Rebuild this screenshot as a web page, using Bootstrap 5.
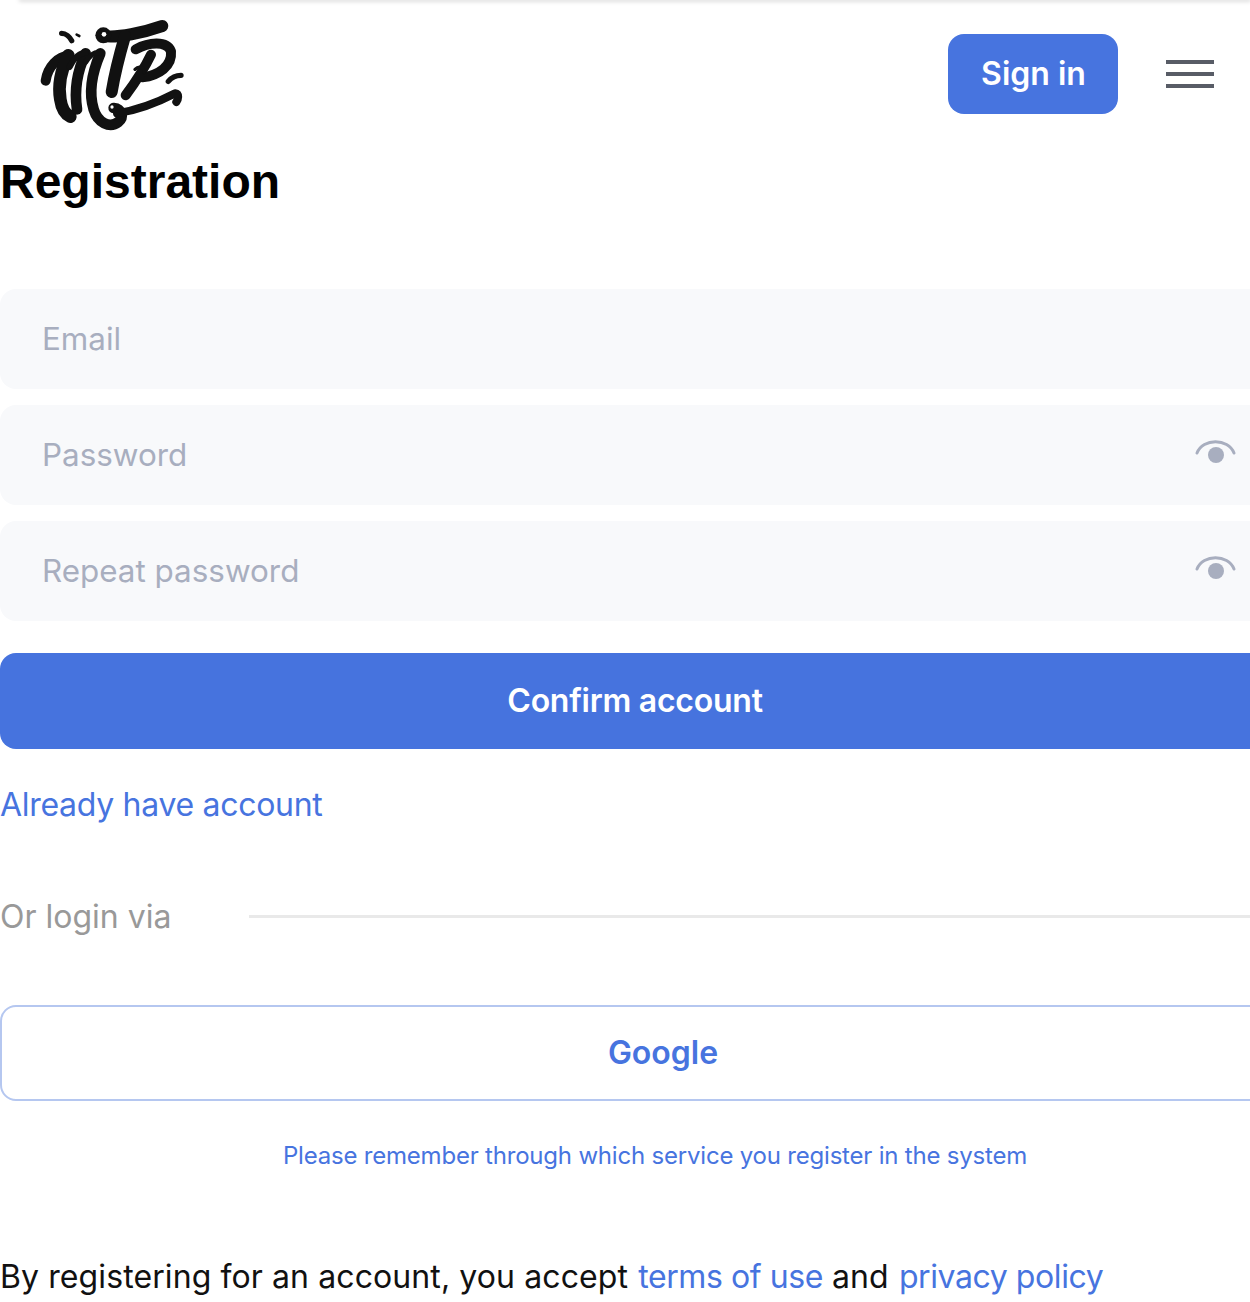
<!DOCTYPE html>
<html lang="en">
<head>
<meta charset="utf-8">
<title>Registration</title>
<link href="https://cdn.jsdelivr.net/npm/bootstrap@5.3.0/dist/css/bootstrap.min.css" rel="stylesheet">
<style>
html,body{overflow-x:hidden;background:#fff}
body{font-family:"Inter","Noto Sans","Liberation Sans",sans-serif;width:1250px;height:1302px;overflow:hidden}
.top-shade{height:0;margin-left:20px;box-shadow:0 0 4px 1px rgba(0,0,0,.25)}
.site-head{height:149px;padding:0 36px 0 35px}
.site-head svg.logo{width:155px;height:122px;margin-top:12px;flex:none}
.signin{width:170px;height:80px;margin-top:34px;background:#4774df;color:#fff;border:0;border-radius:16px;font-size:32px;font-weight:600;line-height:1;padding:0 0 0 1px}
.burger{width:48px;margin-top:60px;margin-left:48px}
.burger i{display:block;height:4px;background:#585c66;margin-bottom:8px}
.page-title{font-family:"Liberation Sans",Arial,sans-serif;font-weight:700;font-size:48px;line-height:66px;color:#000;margin:0 0 74px 0;height:66px}
.field{width:1270px;height:100px;background:#f8f9fb;border-radius:16px;padding:0 40px;margin-bottom:16px;position:relative}
.field input{width:100%;height:100%;border:0;outline:0;background:transparent;font-size:31.4px;color:#333}
.field input::placeholder{color:#a8aebf;opacity:1}
.eye{position:absolute;left:1195px;top:32px;width:42px;height:32px}
.confirm{width:1270px;height:96px;background:#4673de;color:#fff;border:0;border-radius:16px;font-size:32px;font-weight:600;letter-spacing:-.25px;margin-top:32px;display:block}
.have{font-size:32px;line-height:40px;letter-spacing:-.3px;color:#4774df;text-decoration:none;display:block;margin-top:36px}
.via{margin-top:72px;height:40px;width:1270px}
.via span{font-size:32px;line-height:40px;color:#999;width:249px;flex:none}
.via b{display:block;height:3px;background:#e9e9e9;flex:1;margin-top:-2px}
.google{display:block;width:1326px;height:96px;background:#fff;border:2px solid #b5c7f0;border-radius:16px;color:#4774df;font-size:32px;font-weight:600;margin-top:68px}
.notice{width:1310px;font-size:24px;line-height:32px;letter-spacing:-.2px;color:#4774df;text-align:center;margin:39px 0 0}
.terms{font-size:32px;line-height:40px;letter-spacing:.1px;color:#111;margin:84px 0 0;white-space:nowrap;padding-top:1px}
.terms a{color:#4774df;text-decoration:none;letter-spacing:-.42px;margin-left:1px}
</style>
</head>
<body>
<div class="top-shade"></div>
<header class="site-head d-flex align-items-start">
  <svg class="logo" viewBox="0 0 465 366" fill="none" stroke="#111" stroke-linecap="round" stroke-linejoin="round" role="img" aria-label="MTP logo">
    <path d="M32 206C38 165 70 132 100 132" stroke-width="30"/>
    <path d="M100 130C80 170 68 215 76 262C80 290 90 306 106 314" stroke-width="38"/>
    <path d="M152 124C130 170 116 225 126 292" stroke-width="32"/>
    <path d="M104 165C116 140 132 122 152 122" stroke-width="18"/>
    <path d="M196 124C172 180 160 240 176 292C188 332 224 350 250 330C268 316 260 290 236 288" stroke-width="32"/>
    <path d="M152 150C165 130 180 118 196 122" stroke-width="16"/>
    <path d="M205 72C250 78 325 62 382 42" stroke-width="36"/>
    <circle cx="205" cy="70" r="24" fill="#111" stroke="none"/>
    <circle cx="207" cy="67" r="7" fill="#fff" stroke="none"/>
    <path d="M270 72C256 120 240 180 230 240" stroke-width="36"/>
    <path d="M302 112C340 92 394 84 408 118C412 162 372 190 322 196" stroke-width="30"/>
    <path d="M348 128C328 170 298 215 272 250" stroke-width="30"/>
    <path d="M300 172C312 160 330 166 328 182" stroke-width="10"/>
    <path d="M246 304C310 294 370 270 420 244C434 246 430 262 424 270" stroke-width="24"/>
    <path d="M438 190C420 190 410 196 400 208" stroke-width="16"/>
    <path d="M80 64C92 64 104 74 110 86" stroke-width="16"/>
    <path d="M125 68L133 72" stroke-width="8"/>
    <circle cx="231" cy="285" r="5" fill="#fff" stroke="none"/>
  </svg>
  <button class="signin ms-auto" type="button">Sign in</button>
  <div class="burger"><i></i><i></i><i></i></div>
</header>
<main>
  <h1 class="page-title">Registration</h1>
  <div class="field"><input type="text" placeholder="Email"></div>
  <div class="field"><input type="password" placeholder="Password">
    <svg class="eye" viewBox="0 0 42 32"><path d="M2 16C8 1 33 1 39 16" fill="none" stroke="#a8aebf" stroke-width="3" stroke-linecap="round"/><circle cx="21" cy="18" r="8" fill="#a8aebf"/></svg></div>
  <div class="field"><input type="password" placeholder="Repeat password">
    <svg class="eye" viewBox="0 0 42 32"><path d="M2 16C8 1 33 1 39 16" fill="none" stroke="#a8aebf" stroke-width="3" stroke-linecap="round"/><circle cx="21" cy="18" r="8" fill="#a8aebf"/></svg></div>
  <button class="confirm" type="button">Confirm account</button>
  <a class="have" href="#">Already have account</a>
  <div class="via d-flex align-items-center"><span>Or login via</span><b></b></div>
  <button class="google" type="button">Google</button>
  <p class="notice">Please remember through which service you register in the system</p>
  <p class="terms">By registering for an account, you accept <a href="#">terms of use</a> and <a href="#">privacy policy</a></p>
</main>
<script src="https://cdn.jsdelivr.net/npm/bootstrap@5.3.0/dist/js/bootstrap.bundle.min.js"></script>
</body>
</html>
